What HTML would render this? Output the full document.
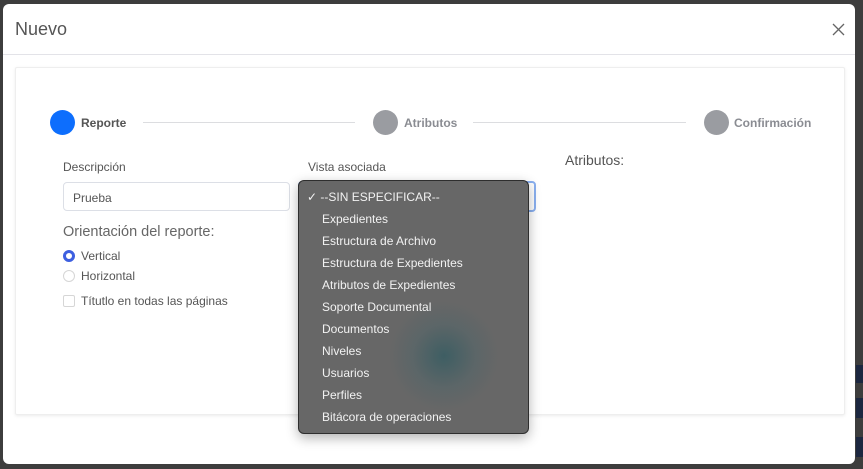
<!DOCTYPE html>
<html><head><meta charset="utf-8"><style>
*{box-sizing:border-box;margin:0;padding:0}
body{width:863px;height:469px;background:#3d3d3d;font-family:"Liberation Sans",sans-serif;position:relative;overflow:hidden}
.modal{position:absolute;left:3px;top:4px;width:852px;height:460px;background:#fff;border-radius:6px}
.hdr{height:51px;border-bottom:1px solid #e3e3e8;position:relative}
.hdr h1{position:absolute;left:12px;top:15px;font-size:18px;font-weight:normal;color:#555}
.card{position:absolute;left:12px;top:63px;width:830px;height:348px;border:1px solid #eee;box-shadow:0 1px 3px rgba(0,0,0,.08);border-radius:2px}
.abs{position:absolute}
.c{width:25px;height:25px;border-radius:50%;background:#9a9ca1}
.st{font-size:12px;font-weight:bold;color:#8a8c92}
.ln{height:1px;background:#dcdde0}
.lbl{font-size:12px;color:#555}
.dd{position:absolute;left:298px;top:180px;width:231px;height:254px;background:#676767;border:1px solid #2e2e2e;border-radius:6px;box-shadow:0 4px 12px rgba(0,0,0,.3);overflow:hidden}
.dd div{position:absolute;left:23px;font-size:12px;color:#f2f2f2}
.glow{position:absolute;left:90px;top:120px;width:110px;height:110px;border-radius:50%;background:radial-gradient(circle,#3e5e63 0%,rgba(80,100,104,.5) 40%,rgba(103,103,103,0) 70%)}
</style></head><body>
<div class="abs" style="left:856px;top:365px;width:7px;height:18px;background:#1c2740"></div>
<div class="abs" style="left:856px;top:398px;width:7px;height:20px;background:#1c2740"></div>
<div class="abs" style="left:856px;top:437px;width:7px;height:20px;background:#1c2740"></div>
<div class="modal">
<div class="hdr"><h1>Nuevo</h1>
<svg class="abs" style="left:829px;top:19px" width="13" height="13"><path d="M1 1L12 12M12 1L1 12" stroke="#666" stroke-width="1.3"/></svg></div>
<div class="card"></div>
</div>
<div class="abs c" style="left:50px;top:110px;background:#0d6efd"></div>
<div class="abs st" style="left:81px;top:116px;color:#555">Reporte</div>
<div class="abs ln" style="left:143px;top:122px;width:212px"></div>
<div class="abs c" style="left:373px;top:110px"></div>
<div class="abs st" style="left:404px;top:116px">Atributos</div>
<div class="abs ln" style="left:473px;top:122px;width:213px"></div>
<div class="abs c" style="left:704px;top:110px"></div>
<div class="abs st" style="left:734px;top:116px">Confirmación</div>
<div class="abs lbl" style="left:63px;top:160px">Descripción</div>
<div class="abs lbl" style="left:308px;top:160px">Vista asociada</div>
<div class="abs" style="left:565px;top:152px;font-size:14px;color:#555">Atributos:</div>
<div class="abs" style="left:63px;top:182px;width:227px;height:29px;border:1px solid #dcdfe6;border-radius:4px;font-size:12px;color:#555;padding:8px 9px">Prueba</div>
<div class="abs" style="left:298px;top:181px;width:238px;height:31px;border:2px solid #8ab0f0;border-radius:4px"></div>
<div class="abs" style="left:63px;top:224px;font-size:14.5px;color:#666">Orientación del reporte:</div>
<div class="abs" style="left:63px;top:250px;width:12px;height:12px;border-radius:50%;border:3.5px solid #3d5fe0;background:#fff"></div>
<div class="abs lbl" style="left:81px;top:249px">Vertical</div>
<div class="abs" style="left:63px;top:270px;width:12px;height:12px;border-radius:50%;border:1px solid #d6d6d6"></div>
<div class="abs lbl" style="left:81px;top:269px">Horizontal</div>
<div class="abs" style="left:63px;top:295px;width:12px;height:12px;border-radius:2px;border:1px solid #d6d6d6"></div>
<div class="abs lbl" style="left:81px;top:294px">Títutlo en todas las páginas</div>
<div class="dd"><span class="glow"></span>
<div style="left:8px;top:9px">✓ --SIN ESPECIFICAR--</div>
<div style="top:31px">Expedientes</div>
<div style="top:53px">Estructura de Archivo</div>
<div style="top:75px">Estructura de Expedientes</div>
<div style="top:97px">Atributos de Expedientes</div>
<div style="top:119px">Soporte Documental</div>
<div style="top:141px">Documentos</div>
<div style="top:163px">Niveles</div>
<div style="top:185px">Usuarios</div>
<div style="top:207px">Perfiles</div>
<div style="top:229px">Bitácora de operaciones</div>
</div>
</body></html>
